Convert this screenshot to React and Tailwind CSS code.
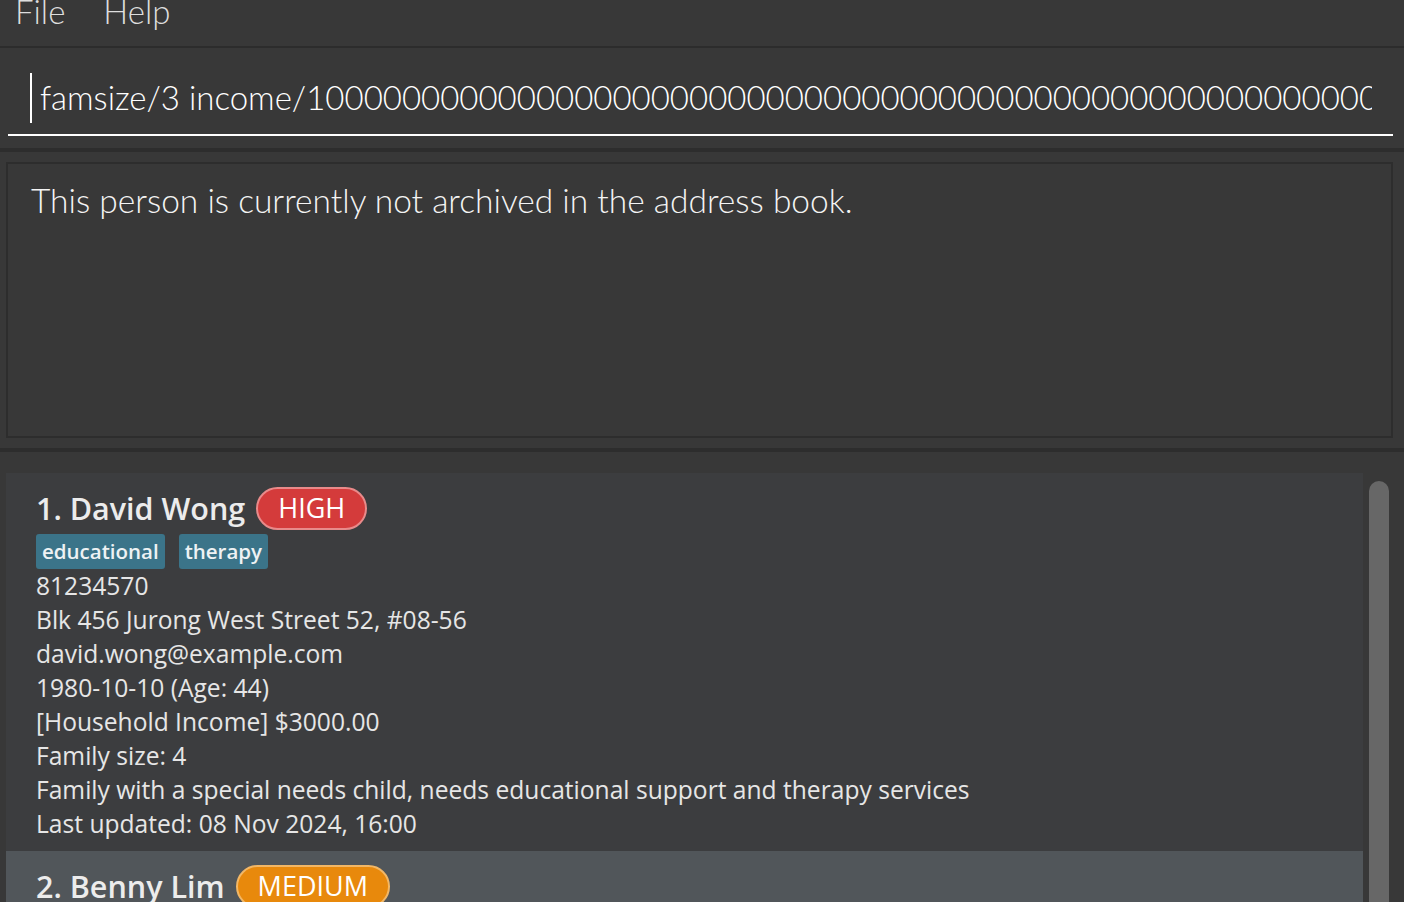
import React from "react";

const LIGHT = { fontFamily: "Lato, 'Open Sans', sans-serif" };
const BODY = { fontFamily: "'Open Sans', 'Noto Sans', sans-serif" };

const people = [
  {
    name: "David Wong",
    priority: "HIGH",
    tags: ["educational", "therapy"],
    lines: [
      "81234570",
      "Blk 456 Jurong West Street 52, #08-56",
      "david.wong@example.com",
      "1980-10-10 (Age: 44)",
      "[Household Income] $3000.00",
      "Family size: 4",
      "Family with a special needs child, needs educational support and therapy services",
      "Last updated: 08 Nov 2024, 16:00",
    ],
  },
  {
    name: "Benny Lim",
    priority: "MEDIUM",
    tags: [],
    lines: [],
  },
];

function Badge({ level }) {
  const cls =
    level === "HIGH"
      ? "bg-[#d43b3b] border-[#e88a8a]"
      : "bg-[#e8890c] border-[#f2b766]";
  return (
    <span
      className={`ml-[11px] inline-flex h-[43px] items-center rounded-full border-2 px-[20px] text-[27px] font-normal text-white ${cls}`}
    >
      {level}
    </span>
  );
}

function PersonCard({ index, person, selected }) {
  return (
    <div
      className={`pl-[30px] pt-[14px] pb-[10px] ${
        selected ? "bg-[#51565a]" : "bg-[#3c3d3f]"
      }`}
      style={BODY}
    >
      <div className="flex h-[43px] items-center text-[30.5px] font-semibold text-[#ececec]">
        <span>
          {index}. {person.name}
        </span>
        <Badge level={person.priority} />
      </div>
      {person.tags.length > 0 && (
        <div className="mt-[4px] flex gap-[14px]">
          {person.tags.map((t) => (
            <span
              key={t}
              className="flex h-[35px] items-center rounded-[3px] bg-[#3b7489] px-[6px] text-[20.5px] font-semibold text-[#eef2f4]"
            >
              {t}
            </span>
          ))}
        </div>
      )}
      <div className="text-[24.6px] leading-[34px] text-[#e6e6e6]">
        {person.lines.map((l, i) => (
          <div key={i}>{l}</div>
        ))}
      </div>
    </div>
  );
}

export default function App() {
  return (
    <div
      className="flex h-[902px] w-[1404px] flex-col overflow-hidden bg-[#383838]"
      style={LIGHT}
    >
      {/* menu bar */}
      <div className="box-content h-[46px] shrink-0 overflow-hidden border-b-2 border-[#2c2c2c]">
        <div className="-mt-[6px] flex gap-[38px] pl-[15px] text-[33px] font-light leading-[34px] text-[#dedede]">
          <span>File</span>
          <span>Help</span>
        </div>
      </div>

      {/* command box */}
      <div className="h-[100px] shrink-0 px-[8px] pt-[25px]">
        <div className="flex h-[50px] items-center overflow-hidden pl-[22px] pr-[24px]">
          <div className="h-[50px] w-[2px] shrink-0 bg-white" />
          <div className="ml-[8px] min-w-0 flex-1 overflow-hidden whitespace-nowrap text-[33px] font-light text-white">
            famsize/3 income/1000000000000000000000000000000000000000000000000000000000000000000000000
          </div>
        </div>
        <div className="mt-[11px] h-[2px] w-[1385px] bg-white" />
      </div>

      <div className="h-[4px] shrink-0 bg-[#2d2d2d]" />

      {/* result display */}
      <div className="h-[296px] shrink-0 px-[6px] pt-[10px]">
        <div className="h-[276px] w-[1387px] border-2 border-[#2d2d2d] pl-[23px] pt-[11px] text-[33.5px] font-light text-[#f4f4f4]">
          This person is currently not archived in the address book.
        </div>
      </div>

      <div className="h-[4px] shrink-0 bg-[#2d2d2d]" />

      {/* person list */}
      <div className="flex min-h-0 flex-1 pt-[21px]">
        <div className="ml-[6px] w-[1357px] overflow-hidden">
          {people.map((p, i) => (
            <PersonCard key={p.name} index={i + 1} person={p} selected={i === 1} />
          ))}
        </div>
        <div className="ml-[6px] w-[20px] pt-[8px]">
          <div className="h-full rounded-t-[10px] bg-[#676767]" />
        </div>
      </div>
    </div>
  );
}
